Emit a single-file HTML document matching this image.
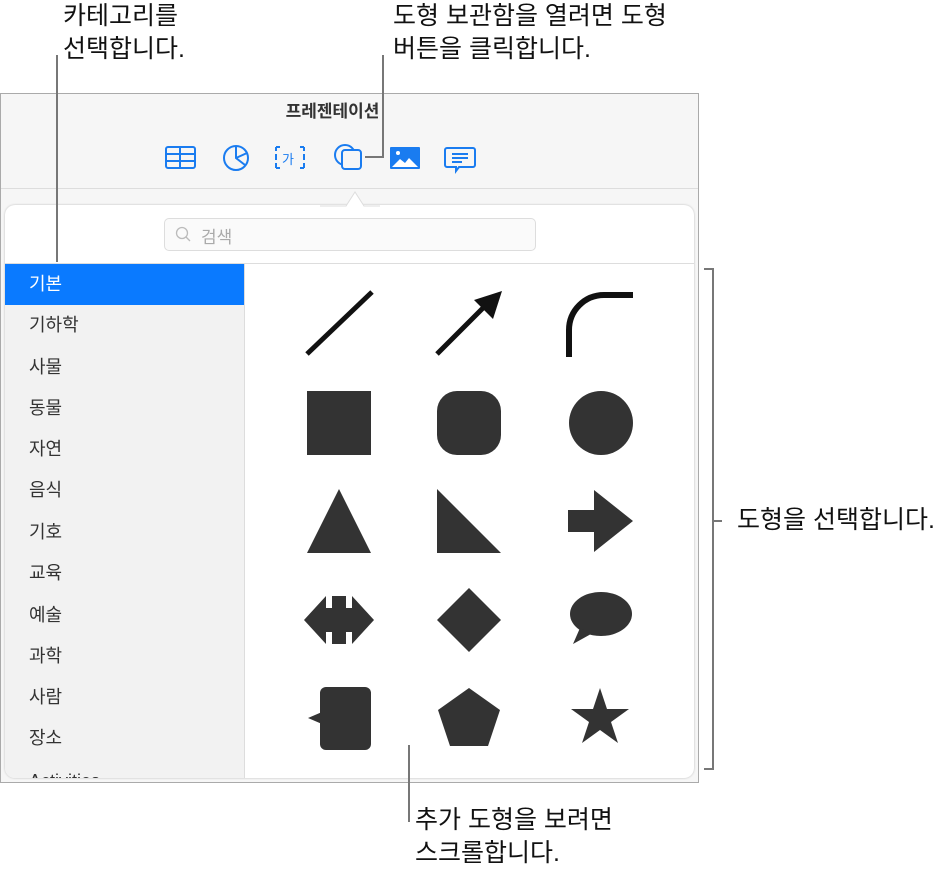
<!DOCTYPE html><html><head><meta charset="utf-8"><style>
body{margin:0;width:952px;height:875px;background:#fff;position:relative;overflow:hidden;font-family:"Liberation Sans","Noto Sans CJK KR",sans-serif}
.t{position:absolute;font-size:25px;color:#111;line-height:33px;white-space:nowrap}
.side div{position:absolute;left:5px;width:239px;height:41px;line-height:41px;padding-left:24px;box-sizing:border-box;font-size:18px;color:#333}
</style></head><body>
<div class="t" style="left:63px;top:0px">카테고리를<br>선택합니다.</div>
<div class="t" style="left:393px;top:0px">도형 보관함을 열려면 도형<br>버튼을 클릭합니다.</div>
<div class="t" style="left:737px;top:504px">도형을 선택합니다.</div>
<div class="t" style="left:415px;top:804px">추가 도형을 보려면<br>스크롤합니다.</div>
<div style="position:absolute;left:0;top:93px;width:697px;height:688px;border:1px solid #aaa;background:#f6f6f6"></div>
<div style="position:absolute;left:1px;top:188px;width:697px;height:1px;background:#ddd"></div>
<div style="position:absolute;left:0;top:97px;width:665px;text-align:center;font-size:17px;font-weight:bold;color:#333">프레젠테이션</div>
<div style="position:absolute;left:5px;top:205px;width:689px;height:573px;background:#fff;border-radius:10px;box-shadow:0 0 2px #bbb;overflow:hidden">
<div style="position:absolute;left:159px;top:13px;width:370px;height:31px;border:1px solid #ddd;border-radius:5px;background:#fafafa"></div>
<svg style="position:absolute;left:169px;top:21px" width="18" height="18"><circle cx="8" cy="7" r="5.5" fill="none" stroke="#bbb" stroke-width="1.3"/><path d="M12 11l4 4" stroke="#bbb" stroke-width="1.3"/></svg>
<div style="position:absolute;left:196px;top:18px;font-size:17px;color:#aaa">검색</div>
<div style="position:absolute;left:0;top:58px;width:689px;height:1px;background:#ddd"></div>
<div style="position:absolute;left:0;top:59px;width:239px;height:520px;background:#f2f2f2;border-right:1px solid #ddd"></div>
</div>
<svg style="position:absolute;left:320px;top:188px" width="60" height="20"><path d="M0 18 L26 18 L35 4 L44 18 L60 18" fill="#fff" stroke="#ddd"/></svg>
<div class="side">
<div style="top:264px;background:#0a7aff;color:#fff">기본</div>
<div style="top:305px">기하학</div><div style="top:347px">사물</div><div style="top:388px">동물</div>
<div style="top:429px">자연</div><div style="top:470px">음식</div><div style="top:512px">기호</div>
<div style="top:553px">교육</div><div style="top:595px">예술</div><div style="top:636px">과학</div>
<div style="top:677px">사람</div><div style="top:718px">장소</div>
<div style="top:765px;height:13px;line-height:32px;overflow:hidden">Activities</div>
</div>
<svg style="position:absolute;left:0;top:0" width="952" height="875">
<g fill="none" stroke="#1a7cf0" stroke-width="2">
<rect x="166" y="147" width="29" height="21" rx="2"/><path d="M166 154h29M166 161h29M180 147v21"/>
<circle cx="236" cy="158" r="12"/><path d="M236 146v12l9 7M236 158l11-5"/>
<path d="M276 147h4M300 147h4M276 168h4M300 168h4M276 147v4M276 154v6M276 163v5M304 147v4M304 154v6M304 163v5"/>
<circle cx="345" cy="155" r="10"/><rect x="342" y="150" width="19" height="19" rx="3" fill="#f6f6f6"/>
<path d="M447 148h26a2 2 0 0 1 2 2v15a2 2 0 0 1-2 2h-14l-3 4v-4h-9a2 2 0 0 1-2-2v-15a2 2 0 0 1 2-2zM452 154h16M452 158h16M452 162h10" />
</g>
<text x="282" y="164" font-size="13" fill="#1a7cf0" font-family="Noto Sans CJK KR">가</text>
<rect x="390" y="147" width="30" height="22" fill="#1a7cf0" rx="1"/><path d="M392 167l8-8 5 4 4-5 9 9z" fill="#fff"/><circle cx="398" cy="153" r="2" fill="#fff"/>
<g stroke="#777" stroke-width="2" fill="none">
<path d="M57 55V262"/><path d="M383 55V157H365"/>
<path d="M704 269h9v500h-9M713 521h9"/><path d="M409 745V822"/>
</g>
<g fill="#333">
<path d="M307 354L372 292" stroke="#111" stroke-width="5"/>
<path d="M437 354L490 301" stroke="#111" stroke-width="5"/><path d="M502 291l-9 28-19-19z" fill="#111"/>
<path d="M569 357V330a35 35 0 0 1 35-35h29" stroke="#111" stroke-width="6" fill="none"/>
<rect x="307" y="391" width="64" height="64"/>
<rect x="437" y="391" width="64" height="64" rx="20"/>
<circle cx="601" cy="423" r="32"/>
<path d="M339 489l32 64h-64z"/><path d="M437 489v64h64z"/>
<path d="M568 510h26v-20l39 31-39 31v-20h-26z"/>
<path d="M305 620l22-24v12h6v-12h14v12h6v-12l22 24-22 24v-12h-6v12h-14v-12h-6v12z" transform="translate(-1 0)"/>
<path d="M469 588l32 32-32 32-32-32z"/>
<ellipse cx="601" cy="614" rx="31" ry="22"/><path d="M580 628l-7 16 18-10z"/>
<rect x="320" y="687" width="51" height="63" rx="6"/><path d="M308 718l14-6v12z"/>
<path d="M469 688l31 22-12 36h-38l-12-36z"/>
<path d="M600 688l7 21h22l-18 13 7 21-18-13-18 13 7-21-18-13h22z"/>
</g>
</svg>
</body></html>
